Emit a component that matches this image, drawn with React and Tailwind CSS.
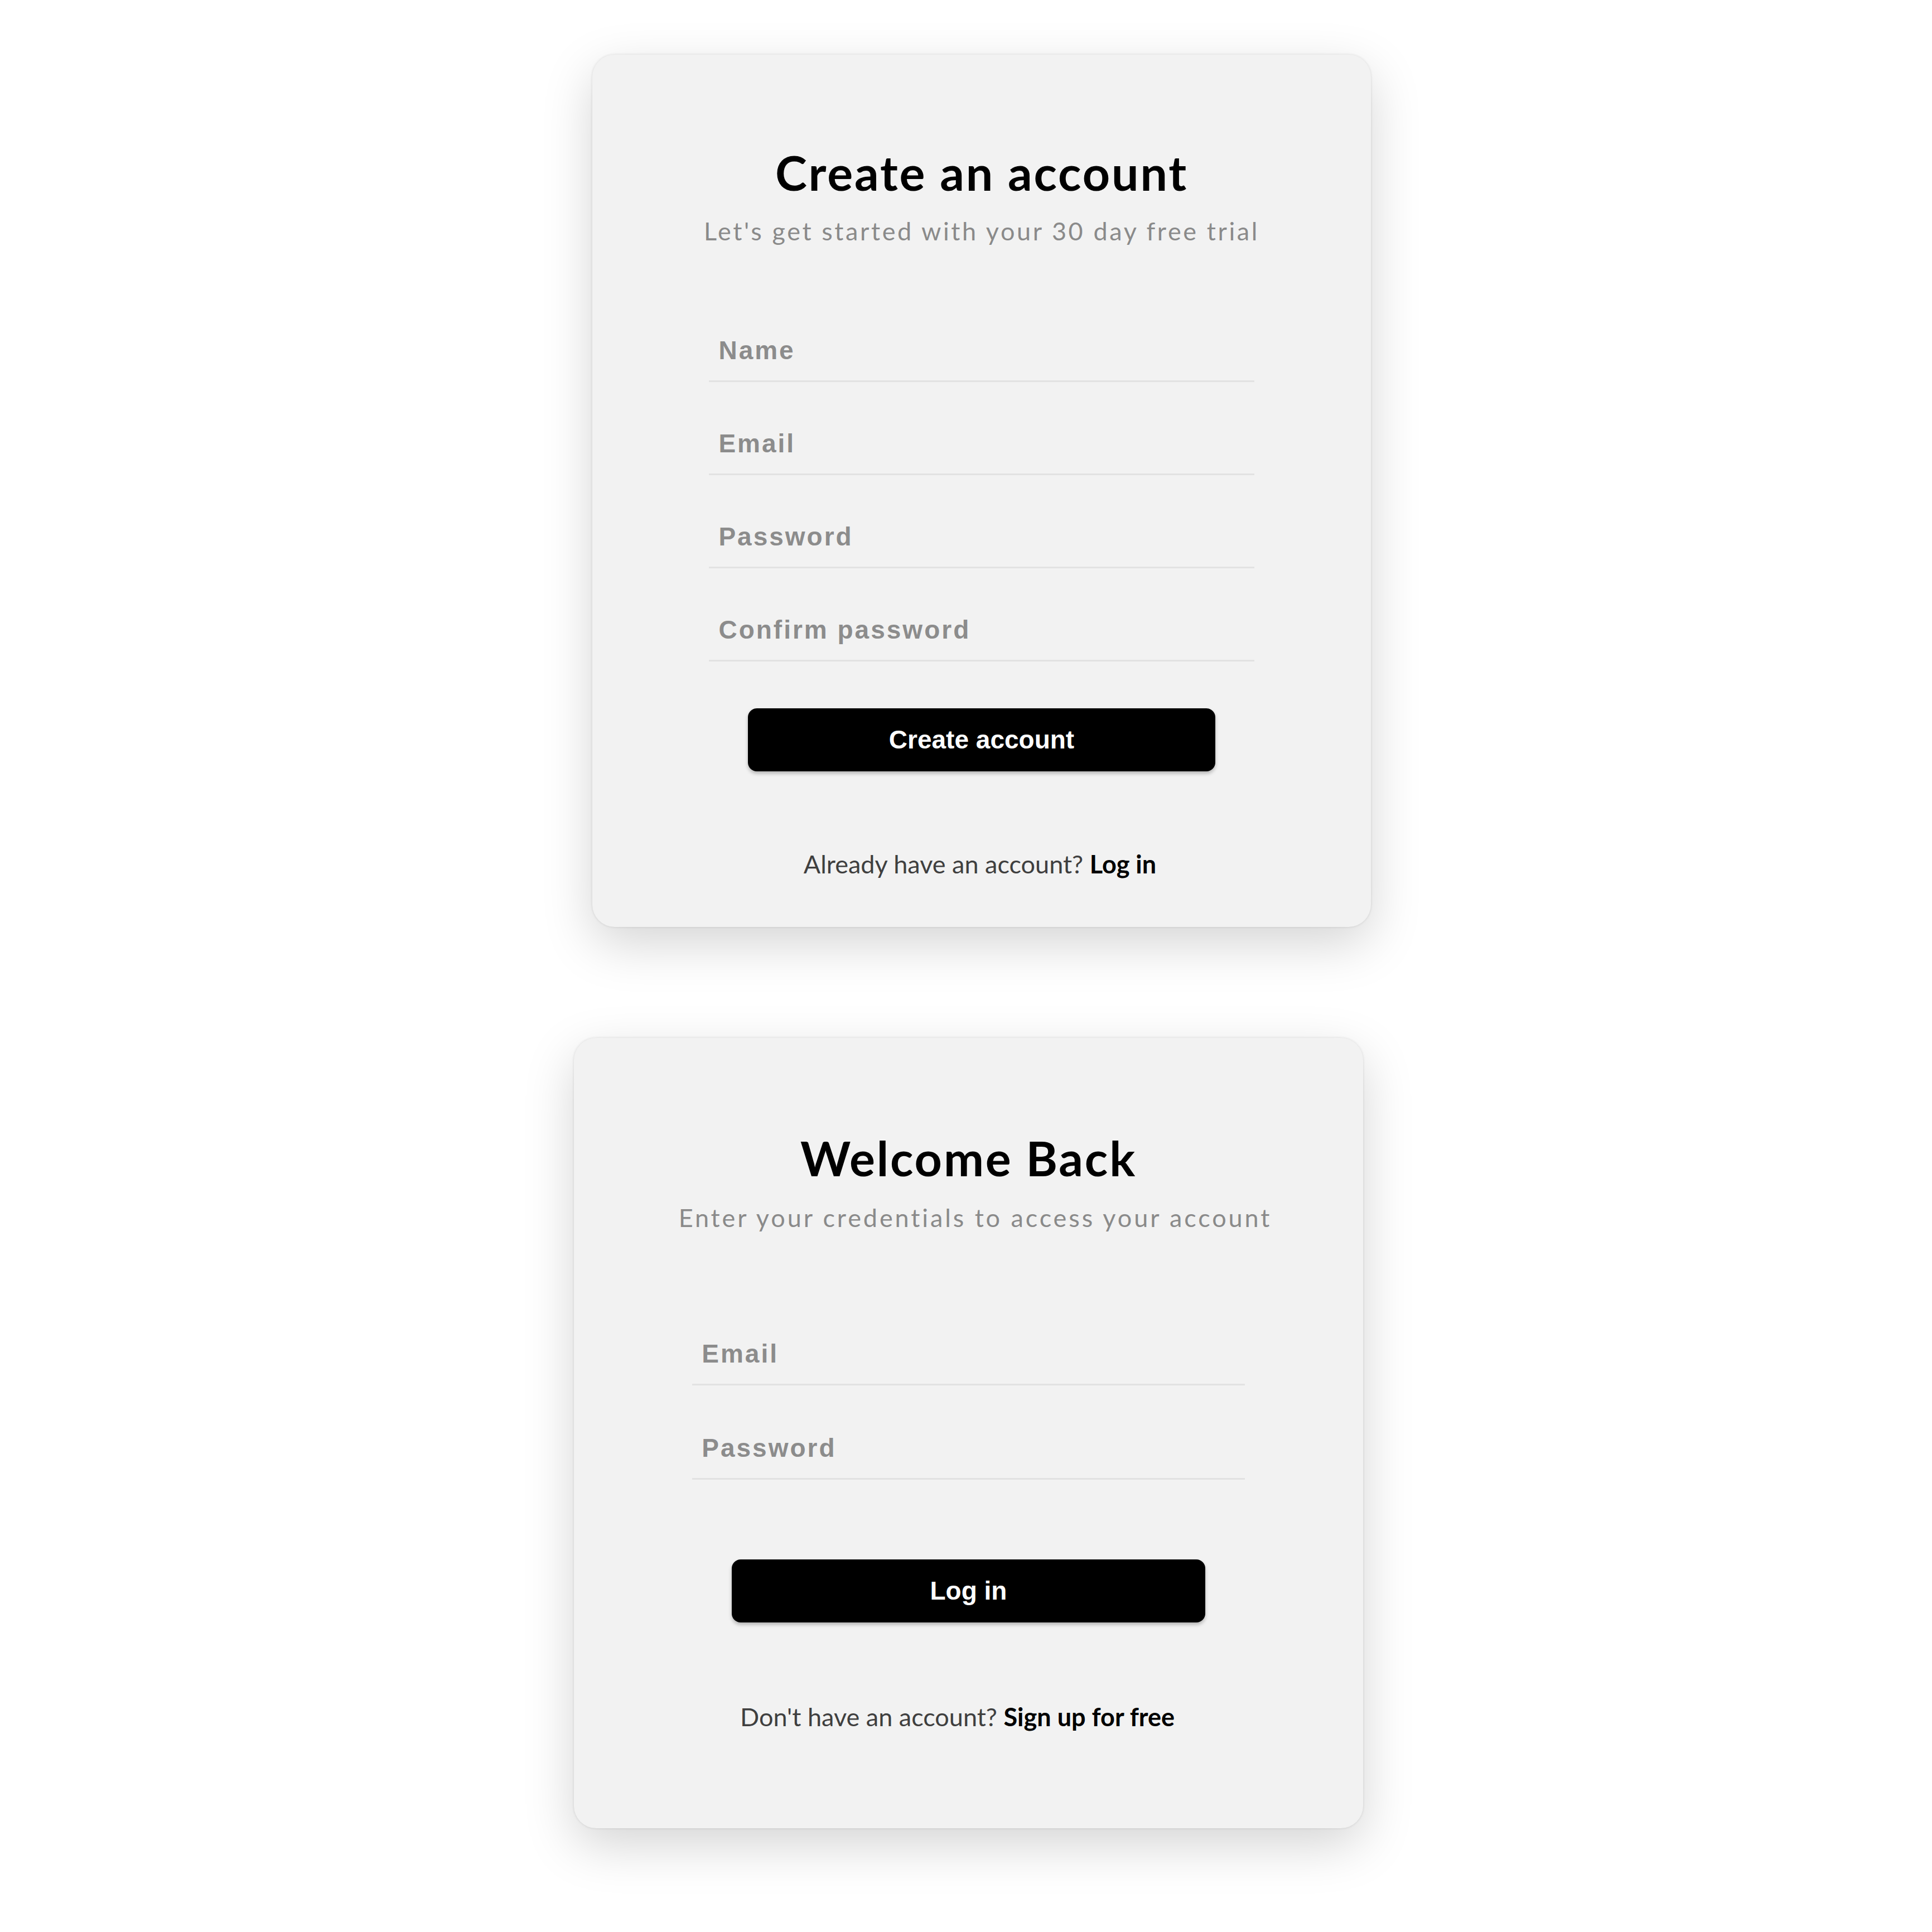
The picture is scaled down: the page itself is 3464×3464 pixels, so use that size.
import React from "react";

function Field({ placeholder, type = "text" }) {
  return (
    <input
      type={type}
      placeholder={placeholder}
      className="block w-[70%] mx-auto h-[112px] bg-transparent border-0 border-b-[3px] border-solid border-[#e2e2e2] pl-[17px] outline-none text-[46px] leading-[56px] font-bold tracking-[3px] text-[#8c8c8c] placeholder:text-[#8c8c8c]"
      style={{ fontFamily: '"Liberation Sans", Arial, sans-serif' }}
    />
  );
}

function Card({ width, title, subtitle, subTrack, subShift, fields, gapTop, gapFields, gapButton, button, footer, link, padTop, titleGap, footGap, footShift, padBottom }) {
  return (
    <div
      className={`${width} bg-[#f2f2f2] rounded-[40px] shadow-[0_0_4px_rgba(0,0,0,0.13),0_30px_90px_rgba(0,0,0,0.17)] ${padTop} ${padBottom}`}
    >
      <h1
        className="text-center text-[86px] leading-[1.2] font-bold text-black tracking-[2.9px] m-0"
        style={{ fontFamily: "Lato, sans-serif" }}
      >
        {title}
      </h1>
      <p
        className={`text-center text-[45px] leading-[1.2] text-[#8a8a8a] ${subTrack} ${subShift} ${titleGap}`}
        style={{ fontFamily: "Lato, sans-serif" }}
      >
        {subtitle}
      </p>
      <div className={`flex flex-col ${gapTop} ${gapFields}`}>
        {fields.map((f) => (
          <Field key={f.p} placeholder={f.p} type={f.t} />
        ))}
      </div>
      <button
        className={`block w-[60%] mx-auto ${gapButton} h-[113px] bg-black text-white rounded-[16px] text-[46px] font-bold shadow-[0_4px_6px_rgba(0,0,0,0.25)]`}
        style={{ fontFamily: '"Liberation Sans", Arial, sans-serif' }}
      >
        {button}
      </button>
      <p
        className={`text-center text-[45px] leading-[1.2] text-[#3f3f3f] ${footGap} ${footShift}`}
        style={{ fontFamily: "Lato, sans-serif" }}
      >
        {footer} <span className="font-bold text-black">{link}</span>
      </p>
    </div>
  );
}

export default function App() {
  return (
    <div className="w-[3464px] min-h-[3464px] bg-white">
      <section className="flex justify-center pl-[56px] pt-[98px] pb-[53px]">
        <Card
          width="w-[1396px]"
          padTop="pt-[159px]"
          padBottom="pb-[86px]"
          title="Create an account"
          subtitle="Let's get started with your 30 day free trial"
          subTrack="tracking-[3.6px]"
          subShift=""
          titleGap="mt-[27px]"
          gapTop="mt-[132px]"
          gapFields="gap-[55px]"
          fields={[
            { p: "Name", t: "text" },
            { p: "Email", t: "email" },
            { p: "Password", t: "password" },
            { p: "Confirm password", t: "password" },
          ]}
          gapButton="mt-[84px]"
          button="Create account"
          footGap="mt-[139px]"
          footShift="pr-[6px]"
          footer="Already have an account?"
          link="Log in"
        />
      </section>
      <section className="flex justify-center bg-white pl-[9px] pt-[146px] pb-[187px]">
        <Card
          width="w-[1415px]"
          padTop="pt-[163px]"
          padBottom="pb-[173px]"
          title="Welcome Back"
          subtitle="Enter your credentials to access your account"
          subTrack="tracking-[3.9px]"
          subShift="pl-[24px]"
          titleGap="mt-[29px]"
          gapTop="mt-[162px]"
          gapFields="gap-[57px]"
          fields={[
            { p: "Email", t: "email" },
            { p: "Password", t: "password" },
          ]}
          gapButton="mt-[143px]"
          button="Log in"
          footGap="mt-[142px]"
          footShift="pr-[40px]"
          footer="Don't have an account?"
          link="Sign up for free"
        />
      </section>
    </div>
  );
}
